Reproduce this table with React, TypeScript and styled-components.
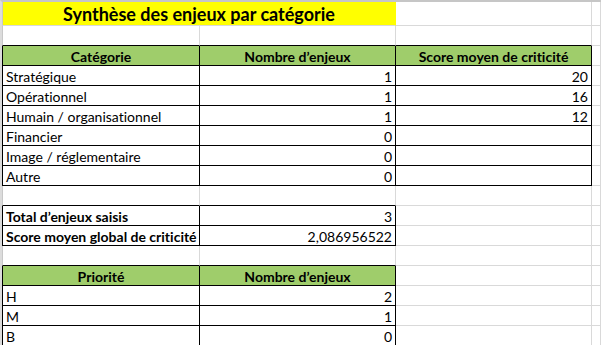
import React from "react";
import styled, { createGlobalStyle } from "styled-components";

const GRIDLINE = "#d9d9d9";
const INK = "#000000";
const YELLOW = "#ffff00";
const GREEN = "#9fcd6b";

const Global = createGlobalStyle`
  html, body {
    margin: 0;
    padding: 0;
    background: #ffffff;
  }
  body {
    font-family: Lato, "Liberation Sans", sans-serif;
    font-variant-ligatures: none;
    color: ${INK};
    overflow: hidden;
  }
`;

type Align = "left" | "center" | "right";

type Cell = {
  text?: string;
  bold?: boolean;
  big?: boolean;
  align?: Align;
  fill?: string;
  boxed?: boolean;
  span?: number;
};

type Row = { height: number; cells: Cell[] };

const label = (text: string, bold = false): Cell => ({ text, bold, boxed: true });
const num = (text: string): Cell => ({ text, align: "right", boxed: true });
const head = (text: string): Cell => ({ text, bold: true, align: "center", fill: GREEN, boxed: true });

const rows: Row[] = [
  {
    height: 24,
    cells: [{ text: "Synthèse des enjeux par catégorie", bold: true, big: true, align: "center", fill: YELLOW, span: 2 }, {}],
  },
  { height: 20, cells: [{}, {}, {}] },
  { height: 20, cells: [head("Catégorie"), head("Nombre d’enjeux"), head("Score moyen de criticité")] },
  { height: 20, cells: [label("Stratégique"), num("1"), num("20")] },
  { height: 20, cells: [label("Opérationnel"), num("1"), num("16")] },
  { height: 20, cells: [label("Humain / organisationnel"), num("1"), num("12")] },
  { height: 20, cells: [label("Financier"), num("0"), num("")] },
  { height: 20, cells: [label("Image / réglementaire"), num("0"), num("")] },
  { height: 20, cells: [label("Autre"), num("0"), num("")] },
  { height: 20, cells: [{}, {}, {}] },
  { height: 20, cells: [label("Total d’enjeux saisis", true), num("3"), {}] },
  { height: 20, cells: [label("Score moyen global de criticité", true), num("2,086956522"), {}] },
  { height: 20, cells: [{}, {}, {}] },
  { height: 20, cells: [head("Priorité"), head("Nombre d’enjeux"), {}] },
  { height: 20, cells: [label("H"), num("2"), {}] },
  { height: 20, cells: [label("M"), num("1"), {}] },
  { height: 20, cells: [label("B"), num("0"), {}] },
];

// map each row's cells onto sheet columns (0..2), taking spans into account
const layout = rows.map((row) => {
  const cols: (Cell | null)[] = [];
  row.cells.forEach((c) => {
    if (cols.length >= 3) return;
    cols.push(c);
    for (let i = 1; i < (c.span ?? 1); i++) cols.push(null);
  });
  while (cols.length < 3) cols.push({});
  return cols;
});

const ownerOf = (r: number, c: number): Cell | undefined => {
  if (r < 0 || r >= layout.length || c < 0 || c > 2) return undefined;
  let k = c;
  while (k > 0 && layout[r][k] === null) k--;
  return layout[r][k] ?? undefined;
};

const isBoxed = (r: number, c: number) => !!ownerOf(r, c)?.boxed;

const Sheet = styled.div`
  display: grid;
  grid-template-columns: 198px 196px 196px 1fr;
  border-top: 2px solid #c6c6c6;
  border-left: 2px solid #dcdcdc;
  width: 601px;
  height: 345px;
  box-sizing: border-box;
  overflow: hidden;
`;

const CellBox = styled.div<{
  $h: number;
  $span: number;
  $fill: string;
  $right: string;
  $bottom: string;
  $left?: string;
  $align: Align;
  $bold: boolean;
  $big: boolean;
}>`
  box-sizing: border-box;
  height: ${(p) => p.$h}px;
  grid-column: span ${(p) => p.$span};
  background: ${(p) => p.$fill};
  border-right: 1px solid ${(p) => p.$right};
  border-bottom: 1px solid ${(p) => p.$bottom};
  ${(p) => (p.$left ? `border-left: 1px solid ${p.$left};` : "")}
  display: flex;
  align-items: flex-end;
  justify-content: ${(p) => (p.$align === "left" ? "flex-start" : p.$align === "right" ? "flex-end" : "center")};
  padding: 0 3px 0 3px;
  font-size: ${(p) => (p.$big ? "18px" : "14px")};
  line-height: ${(p) => (p.$big ? "21px" : "17px")};
  font-weight: ${(p) => (p.$bold ? 700 : 400)};
  white-space: nowrap;
  overflow: hidden;
`;

export default function App() {
  return (
    <>
      <Global />
      <Sheet>
        {layout.map((cols, r) => {
          const h = rows[r].height;
          const out: React.ReactNode[] = [];
          cols.forEach((cell, c) => {
            if (cell === null) return;
            const span = cell.span ?? 1;
            const last = c + span - 1;
            const boxed = isBoxed(r, c);
            const fill = cell.fill ?? "#ffffff";
            const right = boxed || isBoxed(r, last + 1) ? INK : cell.fill ? cell.fill : GRIDLINE;
            const bottom = boxed || isBoxed(r + 1, c) ? INK : GRIDLINE;
            out.push(
              <CellBox
                key={`${r}-${c}`}
                $h={h}
                $span={span}
                $fill={fill}
                $right={right}
                $bottom={bottom}
                $left={c === 0 ? (boxed ? INK : "#c8c8c8") : undefined}
                $align={cell.align ?? "left"}
                $bold={!!cell.bold}
                $big={!!cell.big}
              >
                {cell.text}
              </CellBox>
            );
          });
          out.push(<CellBox key={`${r}-d`} $h={h} $span={1} $fill="#ffffff" $right={GRIDLINE} $bottom={GRIDLINE} $align="left" $bold={false} $big={false} />);
          return out;
        })}
      </Sheet>
    </>
  );
}
